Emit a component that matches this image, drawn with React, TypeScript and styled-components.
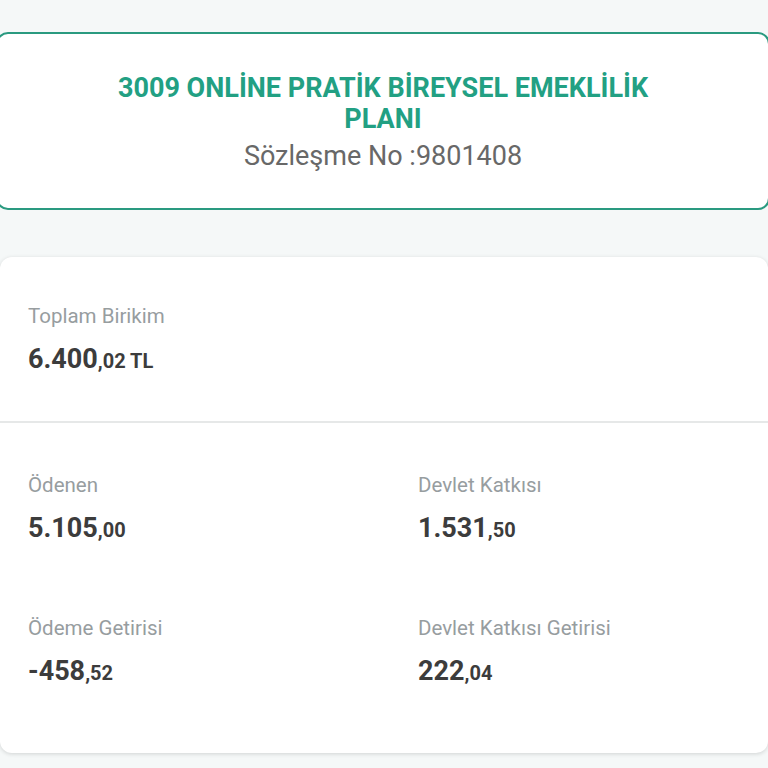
import React from "react";
import styled, { createGlobalStyle } from "styled-components";

const Global = createGlobalStyle`
  html, body { margin: 0; padding: 0; background: #f5f8f8; }
  body { font-family: Roboto, "Noto Sans", sans-serif; overflow: hidden; }
  * { box-sizing: border-box; }
`;

const Page = styled.div`
  width: 768px;
  height: 768px;
  padding-top: 32px;
  display: flex;
  flex-direction: column;
  gap: 47px;
`;

const PlanCard = styled.section`
  margin: 0 -2px 0 -4px;
  height: 178px;
  background: #fff;
  border: 2px solid #2a9a80;
  border-radius: 12px;
  display: flex;
  flex-direction: column;
  align-items: center;
  justify-content: center;
  padding-top: 4px;
`;

const PlanTitle = styled.h1`
  margin: 0;
  font-size: 27px;
  line-height: 31px;
  font-weight: 700;
  color: #22a083;
  text-align: center;
  width: 580px;
`;

const ContractNo = styled.div`
  margin-top: 3px;
  font-size: 27px;
  line-height: 36px;
  color: #686868;
`;

const SummaryCard = styled.section`
  height: 496px;
  background: #fff;
  border-radius: 12px;
  box-shadow: 0 1px 4px rgba(0, 0, 0, 0.15);
  display: flex;
  flex-direction: column;
`;

const TotalBlock = styled.div`
  height: 166px;
  padding: 47px 28px 0;
  border-bottom: 2px solid #e6e8e8;
`;

const Grid = styled.div`
  display: grid;
  grid-template-columns: 390px 1fr;
  row-gap: 70px;
  padding: 50px 28px 0;
`;

const Field = styled.div`
  display: flex;
  flex-direction: column;
  gap: 15px;
`;

const Label = styled.div`
  font-size: 20.5px;
  line-height: 24px;
  color: #979d9f;
`;

const Value = styled.div`
  font-size: 27px;
  line-height: 32px;
  font-weight: 700;
  color: #3c3c3c;
`;

const Small = styled.span`
  font-size: 20px;
`;

const Amount = ({ whole, frac, unit }: { whole: string; frac: string; unit?: string }) => (
  <Value>
    {whole}
    <Small>
      ,{frac}
      {unit ? ` ${unit}` : ""}
    </Small>
  </Value>
);

const items = [
  { label: "Ödenen", whole: "5.105", frac: "00" },
  { label: "Devlet Katkısı", whole: "1.531", frac: "50" },
  { label: "Ödeme Getirisi", whole: "-458", frac: "52" },
  { label: "Devlet Katkısı Getirisi", whole: "222", frac: "04" },
];

export default function App() {
  return (
    <>
      <Global />
      <Page>
        <PlanCard>
          <PlanTitle>3009 ONLİNE PRATİK BİREYSEL EMEKLİLİK PLANI</PlanTitle>
          <ContractNo>Sözleşme No :9801408</ContractNo>
        </PlanCard>
        <SummaryCard>
          <TotalBlock>
            <Field>
              <Label>Toplam Birikim</Label>
              <Amount whole="6.400" frac="02" unit="TL" />
            </Field>
          </TotalBlock>
          <Grid>
            {items.map((it) => (
              <Field key={it.label}>
                <Label>{it.label}</Label>
                <Amount whole={it.whole} frac={it.frac} />
              </Field>
            ))}
          </Grid>
        </SummaryCard>
      </Page>
    </>
  );
}
